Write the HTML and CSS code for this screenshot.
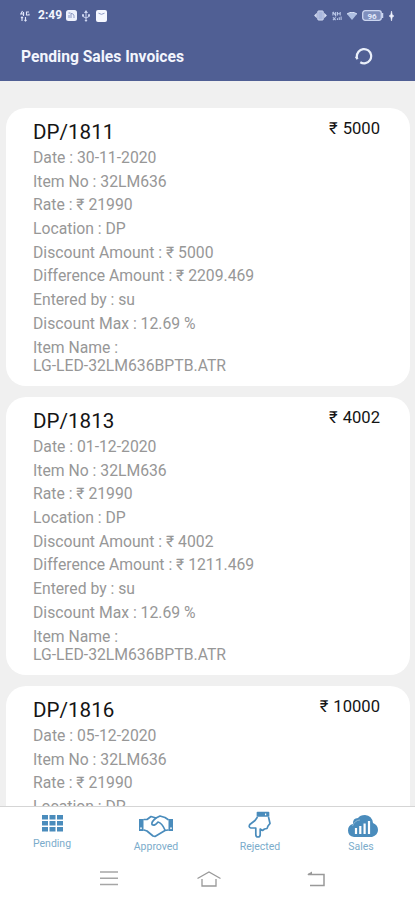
FILE: index.html
```html
<!DOCTYPE html>
<html lang="en">
<head>
    <meta charset="UTF-8">
    <meta name="viewport" content="width=device-width, initial-scale=1.0">
    <title>Pending Sales Invoices</title>
    <link rel="stylesheet" href="styles.css">
</head>
<body>

<header>
    <div class="status-bar">
        <div class="status-left">
            <svg width="12" height="12" viewBox="0 0 12 12" fill="none" stroke="#dfe5fa" stroke-width="1.1"><path d="M2.500 1L.8 4h3.400M3.500 2v4M9 2H6.500v3H9V3.800M2 7v4M1 8l1-1 1 1M5.500 7v4M4.500 10l1 1 1-1"/></svg>
            <span class="clock">2:49</span>
            <svg class="app" width="11" height="11" viewBox="0 0 11 11"><rect width="11" height="11" rx="2.500" fill="#eef1fc"/><path d="M3 8V5M5 8V3.500c2 0 3 1 3 3V8M2.500 3h2" stroke="#8794c0" fill="none"/></svg>
            <svg class="usb" width="10" height="12" viewBox="0 0 10 12" fill="none" stroke="#cdd6f2"><path d="M5 1v10M2 4v2.500l3 1.500 3-1.500V4"/><path d="M5 0l2 3H3zM5 12l-1.500-2h3zM1 4.500h2v2H1zM7 4.500h2v2H7z" fill="#cdd6f2" stroke="none"/></svg>
            <svg class="mail" width="11" height="12" viewBox="0 0 11 12"><rect width="11" height="12" rx="2" fill="#f5f7ff"/><path d="M2.500 3.200Q5.500 5.500 8.500 3.200" stroke="#8f9bc6" fill="none"/></svg>
        </div>
        <div class="status-right">
            <svg width="13" height="11" viewBox="0 0 14 12"><path d="M0 6l3-3v6zM14 6l-3-3v6z" fill="#d5ddf4"/><rect x="4" y="1" width="6" height="10" rx="1" fill="#a9b7dd" stroke="#d5ddf4"/></svg>
            <svg width="10" height="10" viewBox="0 0 11 11" fill="none" stroke="#bac7e8" stroke-width="1.200"><path d="M1 1v4M1 1l3 4V1M6 5V1M6 3h3M9 1v4M1 10l3-3M4 10L1 7M6 10V8M8 10V7M10 10V6"/></svg>
            <svg width="10" height="8" viewBox="0 0 10 8"><path d="M0 2Q5-1.500 10 2L5 8z" fill="#aebfe2"/><path d="M0 2Q5-1.500 10 2" stroke="#dce4f8" fill="none"/></svg>
            <svg width="22" height="11" viewBox="0 0 22 11"><rect x=".7" y=".7" width="18.600" height="9.600" rx="2.500" fill="#7f8fbd" stroke="#cbd5f0" stroke-width="1.300"/><path d="M20.500 3v5" stroke="#cbd5f0" stroke-width="1.500"/><text class="battery-level" x="10" y="8.500" text-anchor="middle">96</text></svg>
            <svg width="5" height="10" viewBox="0 0 5 10"><path d="M2.500 0l.8 4L5 5l-1.700 1-.8 4-.8-4L0 5l1.700-1z" fill="#f2f5ff" stroke="#f2f5ff" stroke-width=".5"/></svg>
        </div>
    </div>
    <div class="title-bar">
        <h1>Pending Sales Invoices</h1>
        <svg class="refresh" width="18" height="18" viewBox="0 0 18 18" fill="none" stroke="#e9effa" stroke-width="2.200"><path d="M2.200 12Q1 8 3.500 4.800A7.100 7.100 0 1 1 5.300 15.200M2.600 12.200L.8 9.500"/></svg>
    </div>
</header>

<main class="invoice-list">
    <div class="invoice">
        <div class="invoice-head"><h2>DP/1811</h2><span class="price">₹ 5000</span></div>
        <p>Date : 30-11-2020</p>
        <p>Item No : 32LM636</p>
        <p>Rate : ₹ 21990</p>
        <p>Location : DP</p>
        <p>Discount Amount : ₹ 5000</p>
        <p>Difference Amount : ₹ 2209.469</p>
        <p>Entered by : su</p>
        <p>Discount Max : 12.69 %</p>
        <p>Item Name :<br>LG-LED-32LM636BPTB.ATR</p>
    </div>
    <div class="invoice">
        <div class="invoice-head"><h2>DP/1813</h2><span class="price">₹ 4002</span></div>
        <p>Date : 01-12-2020</p>
        <p>Item No : 32LM636</p>
        <p>Rate : ₹ 21990</p>
        <p>Location : DP</p>
        <p>Discount Amount : ₹ 4002</p>
        <p>Difference Amount : ₹ 1211.469</p>
        <p>Entered by : su</p>
        <p>Discount Max : 12.69 %</p>
        <p>Item Name :<br>LG-LED-32LM636BPTB.ATR</p>
    </div>
    <div class="invoice">
        <div class="invoice-head"><h2>DP/1816</h2><span class="price">₹ 10000</span></div>
        <p>Date : 05-12-2020</p>
        <p>Item No : 32LM636</p>
        <p>Rate : ₹ 21990</p>
        <p>Location : DP</p>
    </div>
</main>

<nav class="tabs">
    <a class="tab pending">
        <svg width="21" height="17" viewBox="0 0 21 17" fill="#4a8cbc"><path d="M0 0h6v4.500H0zM7.500 0h6v4.500h-6zM15 0h6v4.500h-6zM0 6h6v4.500H0zM7.500 6h6v4.500h-6zM15 6h6v4.500h-6zM0 12h6v4.500H0zM7.500 12h6v4.500h-6zM15 12h6v4.500h-6z"/></svg>
        <span>Pending</span>
    </a>
    <a class="tab">
        <svg width="34" height="23" viewBox="0 0 34 23" fill="none" stroke="#4a8cbc" stroke-width="1.700" stroke-linejoin="round" stroke-linecap="round"><path d="M0 4h4.500v12H0zM29.500 4H34v12h-4.500z" fill="#4a8cbc" stroke="none"/><path d="M5 4.500h3l4-3 5 1.500 4-2 5 1.500 3 2M5 15l3 1 6 5 2 .5 10-6 3-.5"/><path d="M17 3q-5 4-4 6.500 2.500 2 6-2.500 4 1 7 8"/><path d="M2 13.200v.1M32 13.200v.1" stroke="#fff"/></svg>
        <span>Approved</span>
    </a>
    <a class="tab rejected">
        <svg width="24" height="27" viewBox="0 0 24 27" fill="none" stroke="#4a8cbc" stroke-width="1.700" stroke-linejoin="round"><path d="M9.500 1.500h11v3.500h-11z" fill="#4a8cbc"/><path d="M17 3.300h1.200" stroke="#fff"/><path d="M9.500 6L7 9.500 1.800 13.500q-1.500 3 1 3.500h5v6.500q0 2.500 2.200 2.500t2.200-2.500V18l2.300 1.500 2-1.500 2.500-.5 1-2.500 2-2.500L20.500 6"/></svg>
        <span>Rejected</span>
    </a>
    <a class="tab sales">
        <svg width="30" height="23" viewBox="0 0 30 23"><path d="M6 22Q0 21 0 15.500T5 9q-.5-6 5-6 2-3 7-3 7 .5 8 8 5 2 5 7t-6 7z" fill="#4a8cbc"/><path d="M4.500 11Q7 5 12 5" stroke="#8db8d5" fill="none"/><path d="M8 13v6M12.300 11v8M16.600 8.500V19M21 6v13" stroke="#fff" stroke-width="2.200"/></svg>
        <span>Sales</span>
    </a>
</nav>

<footer class="system-nav">
    <svg width="18" height="15" viewBox="0 0 18 15" stroke="#a6a6a6" stroke-width="1.500"><path d="M0 1h18M0 7.200h18M0 13.500h18"/></svg>
    <svg width="24" height="16" viewBox="0 0 24 16" fill="none" stroke="#999" stroke-width="1.300"><path d="M.5 7.500L12 1l11.500 6.500M5 8v7h14V8"/></svg>
    <svg width="18" height="16" viewBox="0 0 18 16" fill="none" stroke="#999" stroke-width="1.500"><path d="M1 3.500h16v11H3"/><path d="M0 3.500L5 .5v3z" fill="#999" stroke="none"/></svg>
</footer>

</body>
</html>
```
FILE: styles.css
```css
* { box-sizing: border-box; }
body { display: flex; flex-direction: column; height: 900px; margin: 0; background: #f0f0f0; font-family: Roboto, "Noto Sans", sans-serif; overflow: hidden; }
h1, h2, p { margin: 0; font-weight: 400; }
svg { display: block; flex: none; }

header { flex: none; height: 81px; background: #505f94; color: #f3f5fd; }
.status-bar { display: flex; justify-content: space-between; height: 31px; padding: 0 21px 0 20px; }
.status-left, .status-right { display: flex; align-items: center; }
.clock { margin: 0 4px 0 6px; font-size: 12px; font-weight: 700; line-height: 31px; }
.usb { margin: 0 5px 0 4px; }
.status-right { gap: 5px; }
.battery-level { font-size: 8px; font-weight: 700; fill: #e3e9fb; }
.title-bar { display: flex; align-items: center; justify-content: space-between; height: 50px; padding: 0 42px 0 21px; }
.title-bar h1 { padding-top: 1px; font-size: 15.650px; font-weight: 700; }

.invoice-list { flex: 1; min-height: 0; padding: 27px 5px 0 6px; overflow: hidden; }
.invoice { height: 277.500px; margin-bottom: 11.500px; padding: 11px 30px 0 27px; background: #fff; border-radius: 20px; }
.invoice-head { display: flex; justify-content: space-between; height: 30px; color: #141414; }
.invoice h2 { font-size: 20.600px; line-height: 26px; }
.price { font-size: 16.600px; line-height: 20px; word-spacing: 1px; }
.invoice p { margin-bottom: 4.950px; color: #979797; font-size: 15.740px; line-height: 18.750px; }

.tabs { display: flex; flex: none; height: 51px; background: #fff; border-top: 1px solid #d5d5d5; }
.tab { display: flex; flex-direction: column; align-items: center; justify-content: space-between; width: 104px; padding: 8px 0 4px; color: #7baccb; font-size: 10.500px; line-height: 12px; }
.pending { padding-bottom: 7px; }
.rejected { padding-top: 4px; }
.sales { width: 98px; }
.sales svg { margin-left: 4px; }

.system-nav { display: grid; grid-template-columns: 97px 110px 18px; flex: none; align-items: center; height: 43px; padding-left: 100px; background: #fff; }
```
